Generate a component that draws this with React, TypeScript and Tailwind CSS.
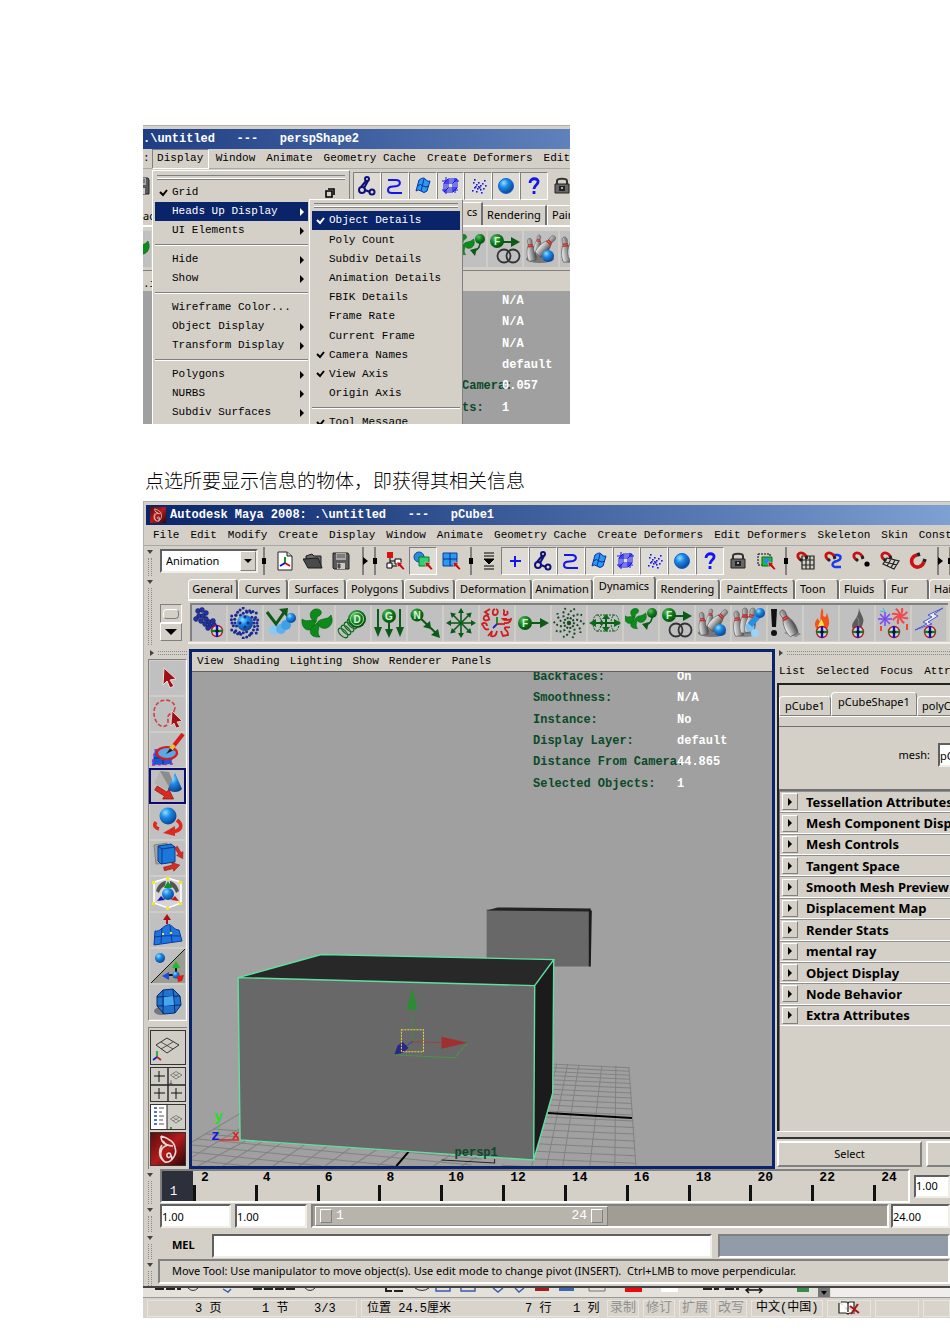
import React from 'react';
import clsx from 'clsx';

const raised = 'border border-t-white border-l-white border-r-[#808080] border-b-[#808080]';
const sunken = 'border border-t-[#808080] border-l-[#808080] border-r-white border-b-white';
const field = 'border-2 border-t-[#606060] border-l-[#606060] border-r-[#f0eee8] border-b-[#f0eee8] bg-white';
const mono = "font-['Liberation_Mono',monospace]";

/* ---------- shared icon parts ---------- */

const IconDefs = () => (
  <svg width="0" height="0" className="absolute" aria-hidden="true">
    <defs>
      <radialGradient id="blue" cx="0.35" cy="0.3" r="0.75">
        <stop offset="0" stopColor="#8fe0ff" />
        <stop offset="0.4" stopColor="#1b8ae6" />
        <stop offset="1" stopColor="#0b3f8c" />
      </radialGradient>
      <radialGradient id="green" cx="0.35" cy="0.3" r="0.75">
        <stop offset="0" stopColor="#5fbf5f" />
        <stop offset="0.5" stopColor="#0f7d1c" />
        <stop offset="1" stopColor="#064a0d" />
      </radialGradient>
      <linearGradient id="pin" x1="0" x2="1">
        <stop offset="0" stopColor="#f2f2f2" />
        <stop offset="1" stopColor="#444" />
      </linearGradient>
      <linearGradient id="maya" x1="0" x2="1" y1="0" y2="1">
        <stop offset="0" stopColor="#5c0a0a" />
        <stop offset="0.5" stopColor="#b31b1b" />
        <stop offset="1" stopColor="#2b0505" />
      </linearGradient>
    </defs>
  </svg>
);

const Target = () => (
  <g>
    <circle cx="17" cy="25" r="5.5" fill="#d6d6ea" stroke="#c01818" strokeWidth="1.4" />
    <path d="M17 19v12" stroke="#1212b8" strokeWidth="2.4" />
    <path d="M11 25h12" stroke="#0a7a2a" strokeWidth="2.4" />
    <path d="M17 23v4M15 25h4" stroke="#000" strokeWidth="1" />
  </g>
);

const Blades = () => (
  <g fill="#0c8a1a" stroke="#065c10" strokeWidth="0.6">
    <path d="M15 15C8 13 7 4 14 2c7-1 8 5 4 7-3 1-2 4-3 6z" />
    <path d="M16 16c3-6 10-2 14-8 4 9-3 15-9 13-3-1-3-3-5-5z" />
    <path d="M15 15c-5-4-9 1-14-3-1 9 5 13 10 10 3-2 2-5 4-7z" />
    <path d="M16 16c5 5-2 8 3 14-9 1-12-5-8-10 2-2 4-2 5-4z" />
  </g>
);

const Pin = ({ at }: { at: string }) => (
  <g transform={at}>
    <path d="M0-13c3 0 3 4 2 7 3 5 4 12 2 18h-8c-2-6-1-13 2-18-1-3-1-7 2-7z" fill="url(#pin)" stroke="#555" strokeWidth="0.6" />
    <path d="M-2.6-6h5.2M-3-4h6" stroke="#c22" strokeWidth="1.3" />
  </g>
);

const Magnet = () => (
  <g fill="none" strokeWidth="2.8">
    <path d="M5 9C1 7 1 3 4 2s6 2 7 5" stroke="#c41111" />
    <path d="M4 8l2 2M10 5l1 3" stroke="#222" />
  </g>
);

const letter = (x: number, y: number, ch: string) => (
  <text x={x} y={y} fill="#d8f5d8" fontSize="10" fontWeight="700" textAnchor="middle" fontFamily="Liberation Sans">{ch}</text>
);

const burst = Array.from({ length: 8 }, (_, i) => i * 45);

const dots = (n: number, r: number, cx: number, cy: number) =>
  Array.from({ length: n }, (_, i) => {
    const a = (i / n) * Math.PI * 2;
    const d = r + ((i * 5) % 4);
    return <circle key={i} cx={cx + Math.cos(a) * d} cy={cy + Math.sin(a) * d} r="1.5" fill="#1b2a94" />;
  });

/* ---------- shelf icons, 32 x 32 ---------- */

const shelfIcons: Record<string, React.ReactNode> = {
  Emitter: (
    <g>
      {[[5, 4], [9, 3], [13, 6], [6, 9], [10, 9], [3, 12], [8, 14], [13, 12], [16, 15], [12, 17], [17, 19], [20, 14], [15, 21], [21, 18]].map(([x, y]) => (
        <circle key={`${x}-${y}`} cx={x} cy={y} r="2.4" fill="#2334a0" stroke="#101c66" strokeWidth="0.6" />
      ))}
      <g transform="translate(7 -1)"><Target /></g>
    </g>
  ),
  'Emit from Object': (
    <g>
      {dots(18, 9, 16, 16)}
      {dots(26, 12, 16, 16)}
      <circle cx="16" cy="16" r="8" fill="url(#blue)" />
      {dots(4, 3, 16, 16)}
    </g>
  ),
  Collide: (
    <g>
      <circle cx="9" cy="23" r="5" fill="#8cc8f0" />
      <circle cx="16" cy="22" r="5" fill="#5db0ee" />
      <circle cx="21" cy="18" r="5" fill="#3fa0ea" />
      <circle cx="26" cy="11" r="5" fill="url(#blue)" />
      <path d="M2 5l9 12L20 4" fill="none" stroke="#0b5a17" strokeWidth="3" />
      <path d="M14 2l9-1-1 9z" fill="#0b5a17" />
    </g>
  ),
  Air: <Blades />,
  Drag: (
    <g>
      {[0, 3, 6, 9].map((i) => (
        <ellipse key={i} cx={6 + i} cy={26 - i} rx="3" ry="6" transform={`rotate(-45 ${6 + i} ${26 - i})`} fill="none" stroke="#0c6a1a" strokeWidth="1.3" />
      ))}
      <circle cx="20" cy="12" r="9" fill="url(#green)" />
      <circle cx="20" cy="12" r="6.5" fill="none" stroke="#a8dca8" />
      {letter(20, 16, 'D')}
    </g>
  ),
  Gravity: (
    <g>
      <path d="M5 2v22M27 2v22M16 16v10" stroke="#0b5a17" strokeWidth="2" />
      <path d="M1 20h8l-4 10zM12 22h8l-4 9zM23 20h8l-4 10z" fill="#0b5a17" />
      <circle cx="16" cy="9" r="7" fill="url(#green)" />
      {letter(16, 13, 'G')}
    </g>
  ),
  Newton: (
    <g>
      <path d="M8 8l20 19" stroke="#0b5a17" strokeWidth="2" />
      <path d="M14 20l7-6 1 8zM22 28l7-6 2 9z" fill="#0b5a17" />
      <circle cx="8" cy="8" r="6.5" fill="url(#green)" />
      {letter(8, 12, 'N')}
    </g>
  ),
  Radial: (
    <g>
      {burst.map((a) => (
        <g key={a} transform={`rotate(${a} 16 16)`}>
          <path d="M16 16V3" stroke="#0b5a17" strokeWidth="1.6" />
          <path d="M13 6l3-5 3 5z" fill="#0b5a17" />
        </g>
      ))}
    </g>
  ),
  Turbulence: (
    <g fill="none" strokeWidth="1.8">
      <path d="M14 2c-3 1-3 6 0 6s4-5 1-6M22 3c3 0-1 5 2 5s3-2 2-4M26 12h-4c2 2 5 1 8 0-1 5-5 4-7 4M29 20c-3 1-6-1-5 2 3 4 3 2 3 6l-5 1-2-5M16 24c-1 5-3 6-6 5l1-5-4 5M8 22c-4 2-5-2-7-5 2-2 5-1 5 2M9 12C4 15 2 13 3 10c2-3 5-1 5 2M8 8l-4-3 5-3" stroke="#d01c1c" />
      <path d="M16 17v-7" stroke="#0b8a1a" />
      <path d="M16 17h8" stroke="#d01c1c" />
      <path d="M16 17l-4 4" stroke="#2222c0" />
    </g>
  ),
  Uniform: (
    <g>
      <path d="M12 16h14" stroke="#0b5a17" strokeWidth="2" />
      <path d="M23 11l9 5-9 5z" fill="#0b5a17" />
      <circle cx="8" cy="16" r="7" fill="url(#green)" />
      {letter(8, 20, 'F')}
    </g>
  ),
  Vortex: (
    <g fill="none" stroke="#1b4a22" strokeWidth="2" strokeDasharray="2 2">
      {Array.from({ length: 10 }, (_, i) => i * 36).map((a) => (
        <path key={a} d="M16 16c-3-5-1-12 6-14" transform={`rotate(${a} 16 16)`} />
      ))}
    </g>
  ),
  'Volume Axis': (
    <g>
      <path d="M8 8h18M8 24h18" stroke="#0b5a17" strokeDasharray="2 1" />
      <ellipse cx="8" cy="16" rx="4" ry="8" fill="none" stroke="#0b5a17" strokeDasharray="2 1" />
      <ellipse cx="26" cy="16" rx="4" ry="8" fill="none" stroke="#0b5a17" strokeDasharray="2 1" />
      <path d="M4 16h24M17 9v14" stroke="#0b5a17" strokeWidth="2" />
      <path d="M0 16l7-4v8zM32 16l-7-4v8zM17 7l4 5h-8zM17 25l4-5h-8zM12 12l3 4-3 4z" fill="#0b6a17" />
    </g>
  ),
  'Volume Curve': (
    <g>
      <g transform="translate(-1 0) scale(0.72)"><Blades /></g>
      <path d="M27 7c1 6-2 10-6 11" fill="none" stroke="#0b5a17" strokeWidth="1.6" />
      <path d="M17 17l7-2-2 8z" fill="#0b5a17" />
      <circle cx="27" cy="6" r="5" fill="url(#green)" />
    </g>
  ),
  'Use Selected': (
    <g>
      <path d="M12 9h12" stroke="#0b5a17" strokeWidth="2" />
      <path d="M22 4l9 5-9 5z" fill="#0b5a17" />
      <circle cx="8" cy="8" r="7" fill="url(#green)" />
      {letter(8, 12, 'F')}
      <circle cx="15" cy="23" r="6.5" fill="none" stroke="#333" strokeWidth="1.8" />
      <circle cx="24" cy="23" r="6.5" fill="none" stroke="#333" strokeWidth="1.8" />
    </g>
  ),
  'Active Body': (
    <g>
      <ellipse cx="15" cy="26" rx="14" ry="4" fill="#777" />
      <Pin at="translate(6 17) rotate(-8) scale(.9)" />
      <Pin at="translate(13 11) rotate(8) scale(.7)" />
      <Pin at="translate(21 13) rotate(42)" />
      <circle cx="23" cy="23" r="6" fill="url(#blue)" />
    </g>
  ),
  'Passive Body': (
    <g>
      <ellipse cx="12" cy="27" rx="11" ry="3" fill="#888" />
      <Pin at="translate(5 17) rotate(-8)" />
      <Pin at="translate(12 14)" />
      <Pin at="translate(18 14) rotate(10)" />
      <circle cx="17" cy="20" r="4.500" fill="#7cc0f0" />
      <circle cx="22" cy="26" r="4" fill="#9ed2f5" />
      <path d="M17 18l9-10" stroke="#2b8fe0" strokeWidth="6" />
      <circle cx="27" cy="6" r="5" fill="url(#blue)" />
    </g>
  ),
  'Set Active Key': (
    <g>
      <path d="M2 2h6l-1 18H3z" fill="#111" />
      <circle cx="5" cy="26" r="3" fill="#111" />
      <path d="M15 26l12 4 5-3-9-5z" fill="#888" />
      <Pin at="translate(19 16) rotate(-28) scale(1.1)" />
    </g>
  ),
  'Create Fire': (
    <g>
      <path d="M17 1c3 5-1 7 3 9 2-1 1-3 2-4 2 6 4 12-1 17h-8c-5-4-3-9 0-12 0 2 1 3 2 3 1-5 0-8 2-13z" fill="#f0541c" />
      <path d="M16 12c2 3 4 5 2 10h-4c-2-4 1-6 2-10z" fill="#ffe24a" />
      <Target />
    </g>
  ),
  'Create Smoke': (
    <g>
      <path d="M18 1c1 6 6 10 4 15-1 5-3 6-5 7h-4c-3-3-2-6 0-9 3-4 5-8 5-13z" fill="#5c5c5c" />
      <path d="M16 10c3 4 2 8 0 12" stroke="#888" fill="none" />
      <Target />
    </g>
  ),
  'Create Fireworks': (
    <g>
      {burst.map((a) => (
        <g key={a}>
          <path d="M8 12V5" transform={`rotate(${a} 8 12)`} stroke="#7a4af0" strokeWidth="1.6" />
          <path d="M23 9q3-4 2-8" transform={`rotate(${a} 23 9)`} fill="none" stroke="#f04a4a" strokeWidth="2" />
        </g>
      ))}
      <path d="M6 1l2 4M3 4l5 1" stroke="#3ab8e8" />
      <path d="M4 19v5M30 17v6" stroke="#f04a2a" strokeWidth="2" />
      <Target />
    </g>
  ),
  'Create Lightning': (
    <g>
      <path d="M30 1L15 8l4 2-9 5 4 2L2 23l17-6-4-2 10-6-4-2z" fill="#eef" stroke="#4a5ad0" strokeWidth="1" />
      <Target />
    </g>
  ),
};

/* ---------- status line icons, 20 x 20 ---------- */

const cursor = <path d="M12 11l6 1-2 1 4 5-2 1-4-4-1 2z" fill="#c01010" stroke="#fff" strokeWidth="0.4" />;

const lineIcons: Record<string, React.ReactNode> = {
  New: (
    <g>
      <path d="M3 1h9l5 4v14H3z" fill="#fff" stroke="#222" />
      <path d="M12 1v4h5" fill="#ccc" stroke="#222" />
      <path d="M10 12V6" stroke="#0a9a1a" strokeWidth="2" />
      <path d="M10 12l5 3" stroke="#d01010" strokeWidth="2" />
      <path d="M10 12l-5 3" stroke="#1010d0" strokeWidth="2" />
    </g>
  ),
  Open: (
    <g>
      <path d="M3 8V5l6-2 2 2h7v11" fill="#6a6a6a" stroke="#1c1c1c" />
      <path d="M0 8l15-1 4 10H5z" fill="#4a4a4a" stroke="#1c1c1c" />
    </g>
  ),
  Save: (
    <g>
      <path d="M2 2h15l1 2v14H3l-1-1z" fill="#5a5a5a" stroke="#222" />
      <path d="M5 2h10v7H5z" fill="#a8a8a8" />
      <path d="M6 12h8v6H6z" fill="#c8c8c8" />
      <path d="M7 13h2v4H7zM6 4h8M6 6h8" stroke="#555" fill="#333" />
    </g>
  ),
  Hierarchy: (
    <g>
      <path d="M5 6v9M5 10h7M5 15h7" stroke="#000" fill="none" />
      <path d="M2 1h6v6H2z" fill="#d81010" />
      <path d="M2 12h5v5H2zM10 8h6v5h-6z" fill="#fff" stroke="#000" />
      {cursor}
    </g>
  ),
  Object: (
    <g>
      <circle cx="6" cy="6" r="5" fill="#2a8ae0" stroke="#104a90" />
      <path d="M6 6h10v9H6z" fill="#30d070" stroke="#0a7a2a" />
      {cursor}
    </g>
  ),
  Component: (
    <g>
      <path d="M2 2h14v13H2z" fill="#2a9af0" stroke="#0a3aa0" />
      <path d="M9 2v13M2 8h14" stroke="#0a2a90" />
      {cursor}
    </g>
  ),
  Mask: <path d="M5 2h10M5 5h10M5 15h10M5 18h10M5 8h10l-5 5z" fill="#000" stroke="#000" strokeWidth="1" />,
  Handles: <path d="M10 5v11M5 10h11" stroke="#1414f0" strokeWidth="2" />,
  Joints: (
    <g fill="none" stroke="#10107a" strokeWidth="2">
      <circle cx="10" cy="3" r="2" /><circle cx="5" cy="14" r="3" /><circle cx="15" cy="16" r="2.5" />
      <path d="M9 5l-5 6M11 5l-4 7M8 14l5 2" />
    </g>
  ),
  Curves: <path d="M3 4h8c5 0 5 5 1 6-5 1-9 0-9 4s4 3 14 3" fill="none" stroke="#1414f0" strokeWidth="2" />,
  Surfaces: (
    <g stroke="#0a30a0" fill="#2a9af0">
      <path d="M6 4q5-4 7 0 2 2 4 1l-3 10q-3 3-6 0-3-2-5 0z" />
      <path d="M11 3l-3 12M4 10q4-3 6 0 3 2 6 0" fill="none" />
    </g>
  ),
  Deformers: <path d="M3 7h9v9H3zM7 3h9v9H7zM3 7l4-4M12 7l4-4M12 16l4-4M3 16l4-4M5 1v17M14 2v15M1 5h17M1 14h16" fill="none" stroke="#1414f0" />,
  Dynamics: (
    <g fill="#1414f0">
      {[[10, 10], [8, 8], [12, 9], [9, 12], [12, 13], [6, 11], [14, 7], [10, 6], [5, 6], [15, 12], [4, 14], [8, 15], [13, 16], [16, 4], [6, 3], [11, 11], [7, 10], [17, 9]].map(([x, y]) => (
        <rect key={`${x}-${y}`} x={x} y={y} width="1.6" height="1.6" />
      ))}
    </g>
  ),
  Rendering: <circle cx="10" cy="10" r="7.5" fill="url(#blue)" stroke="#1060d8" />,
  Miscellaneous: <path d="M6 7c0-6 9-5 8-1 0 3-4 3-4 7M10 15v3" fill="none" stroke="#1414f0" strokeWidth="2.8" />,
  Lock: (
    <g>
      <path d="M5 9V5c0-3 10-3 10 0v4" fill="none" stroke="#333" strokeWidth="2" />
      <path d="M3 8h14v9H3z" fill="#666" stroke="#222" />
      <path d="M7 10h6v5H7z" fill="#222" /><path d="M9 11h2v2H9z" fill="#aaa" />
    </g>
  ),
  Highlight: (
    <g>
      <path d="M2 3h12v11H2z" fill="none" stroke="#000" strokeDasharray="2 1" />
      <path d="M6 6h10v9H6z" fill="#18c030" stroke="#0a6a1a" /><circle cx="11" cy="10" r="3" fill="#2a8ae0" />
      {cursor}
    </g>
  ),
  'Snap to Grid': (
    <g>
      <path d="M6 5h12v13H6zM10 5v13M14 5v13M6 9h12M6 14h12" fill="none" stroke="#222" strokeWidth="1.2" />
      <Magnet />
    </g>
  ),
  'Snap to Curve': (
    <g>
      <path d="M9 4h5c4 1 3 5-1 6-5 1-6 5-2 6h6" fill="none" stroke="#1a3af0" strokeWidth="2.4" />
      <Magnet />
    </g>
  ),
  'Snap to Point': (
    <g>
      <circle cx="15" cy="13" r="2.6" fill="#000" />
      <Magnet />
    </g>
  ),
  'Snap to Plane': (
    <g>
      <path d="M7 7l12 3-5 8-11-5zM11 8l-4 7M15 9l-4 8M5 11l12 3" fill="none" stroke="#222" strokeWidth="1.2" />
      <Magnet />
    </g>
  ),
  'Make Live': (
    <g fill="none" strokeWidth="3.6">
      <path d="M9 4C4 5 2 10 5 14s9 2 11-3" stroke="#c81414" />
      <path d="M9 4l3-1M16 11l1-3" stroke="#222" />
    </g>
  ),
};

const LineIcon = ({ name }: { name: string }) => (
  <svg viewBox="0 0 20 20" className="size-5 flex-none" aria-hidden="true">{lineIcons[name]}</svg>
);

const ToolButton = ({ name, framed, width = 'w-7 flex-none' }: { name: string; framed?: boolean; width?: string }) => (
  <button
    aria-label={name}
    className={clsx('flex h-7 items-center justify-center border', width, framed ? 'border-t-[#808080] border-l-[#808080] border-r-white border-b-white bg-[#dedbd4]' : 'border-transparent')}
  >
    <LineIcon name={name} />
  </button>
);

const Divider = ({ arrow }: { arrow?: boolean }) => (
  <svg viewBox="0 0 12 28" className="h-7 w-3 flex-none" aria-hidden="true">
    <path d="M6 0v28" stroke="#333" strokeWidth="1" />
    {arrow ? <path d="M6 10l5 4-5 4z" /> : <path d="M4 11h4v6H4z" />}
  </svg>
);

const Grip = ({ className }: { className?: string }) => (
  <div className={clsx('flex w-3 flex-none flex-col items-center gap-1 pt-1', className)}>
    <svg viewBox="0 0 6 4" className="h-1 w-1.5 flex-none"><path d="M0 0h6L3 4z" fill="#444" /></svg>
    <div className="w-1 flex-1 border-x border-dotted border-[#8a8a8a]" />
  </div>
);

const HGrip = () => (
  <div className="flex h-2.5 flex-none items-center gap-1 pb-0.5 pl-0.5">
    <svg viewBox="0 0 4 6" className="h-1.5 w-1 flex-none"><path d="M0 0v6l4-3z" fill="#444" /></svg>
    <div className="h-1 flex-1 border-y border-dotted border-[#8a8a8a]" />
  </div>
);

const ShelfButton = ({ name }: { name: string }) => (
  <button aria-label={name} className="flex h-9 w-9 flex-none items-center justify-center border-r-2 border-[#d0cdc6] bg-[#c0c0c0]">
    <svg viewBox="0 0 32 32" className="size-8 flex-none" aria-hidden="true">{shelfIcons[name]}</svg>
  </button>
);

/* ---------- tool box ---------- */

const RedArrow = ({ at }: { at: string }) => (
  <path d="M0-2h10v-3l8 5-8 5v-3H0z" transform={at} fill="#dc2a22" stroke="#8c1410" strokeWidth="0.6" />
);

const toolIcons: Record<string, React.ReactNode> = {
  Select: <path d="M13 7l12 11-6 1 4 6-4 2-3-7-4 4z" fill="#9c1016" stroke="#f4dcdc" strokeWidth="1" />,
  Lasso: (
    <g>
      <path d="M23 14c4-8-6-13-13-10S1 16 5 24s12 6 12 1-1-6 2-8 4-1 4-3z" fill="none" stroke="#d04040" strokeWidth="1.6" strokeDasharray="4 2" />
      <path d="M21 14l10 10-5 1 3 5-4 1-2-5-3 3z" fill="#9c1016" stroke="#f4dcdc" strokeWidth="0.8" />
    </g>
  ),
  Paint: (
    <g>
      <path d="M4 17l16-1 1 15-20 1z" fill="#1a5ad0" stroke="#b020d0" strokeDasharray="3 3" strokeWidth="1.6" />
      <path d="M12 17v15M3 25h18" stroke="#0a2a80" />
      <ellipse cx="16" cy="20" rx="10" ry="6" fill="#5aa8e8" stroke="#d81c1c" strokeWidth="2.2" />
      <path d="M15 21l5-7 3 3z" fill="#222" />
      <path d="M21 15L32 1" stroke="#d81c1c" strokeWidth="4" />
      <path d="M20 16l3-4" stroke="#f0c030" strokeWidth="4" />
    </g>
  ),
  Move: (
    <g>
      <path d="M3 14L9 2l3 3 8 13-4 3z" fill="#b4b4b4" />
      <path d="M9 2l9 1 5 12-5 3z" fill="#8c8c8c" />
      <path d="M24 4l7 16c-3 4-11 4-14 0z" fill="url(#blue)" />
      <RedArrow at="translate(5 19) rotate(32) scale(1.15)" />
    </g>
  ),
  Rotate: (
    <g>
      <path d="M5 17c-3 4 0 6 3 7M26 15c6 5 5 10-4 12" fill="none" stroke="#dc2a22" strokeWidth="3.6" />
      <path d="M24 21v10l-12-3z" fill="#dc2a22" />
      <circle cx="17" cy="11" r="8.5" fill="url(#blue)" />
    </g>
  ),
  Scale: (
    <g>
      <path d="M3 4l13-2v20L5 23z" fill="#a4a4a4" stroke="#808080" />
      <path d="M7 5l13-2 4 3v15l-14 2-3-3z" fill="#1a78d8" stroke="#0a3a90" />
      <path d="M7 5l4 3 13-2M11 8v15" fill="none" stroke="#0a3a90" />
      <RedArrow at="translate(25 6) rotate(60) scale(.75)" />
      <RedArrow at="translate(13 28) rotate(-14) scale(.9)" />
    </g>
  ),
  Universal: (
    <g>
      <path d="M3 5l14-4 13 4v21l-13 5-14-5z" fill="#d4d4d4" stroke="#fff" strokeWidth="1.6" />
      <path d="M5 14c2-8 8-10 10-10l-1 5c-4 2-5 4-6 7zM28 14c-2-8-8-10-9-10l0 5c4 2 5 4 6 7z" fill="#555" />
      <circle cx="17" cy="17" r="6" fill="url(#blue)" />
      <path d="M17 4l4 7h-8z" fill="#10902a" />
      <path d="M6 24l8-1-4-4z" fill="#1818b0" /><path d="M28 24l-8-1 4-4z" fill="#c01818" />
      {[[3, 5], [17, 1], [30, 5], [3, 26], [17, 31], [30, 26]].map(([x, y]) => (
        <rect key={`${x}-${y}`} x={x - 2} y={y - 1} width="3" height="3" fill="#f4e820" />
      ))}
    </g>
  ),
  'Soft Modification': (
    <g>
      <path d="M4 18c5 1 7-4 12-6s6 5 12 5l3 11-28 4z" fill="#1f74e0" stroke="#0a3a9a" />
      <path d="M11 15l-1 15M19 13l2 16M4 24c9-2 17-1 25-1" stroke="#0a3a9a" fill="none" />
      <path d="M16 11V6" stroke="#b01010" strokeWidth="2" /><path d="M12 7l4-6 4 6z" fill="#b01010" />
      <path d="M11 20h2v2h-2zM19 19h2v2h-2z" fill="#f4e820" />
    </g>
  ),
  Manipulator: (
    <g>
      <path d="M34 0v34H0z" fill="#9c9c90" /><path d="M34 0L0 34" stroke="#111" />
      <circle cx="9" cy="9" r="5" fill="url(#blue)" />
      <path d="M25 26V16M25 26h-9" stroke="#111" strokeWidth="2" />
      <circle cx="25" cy="26" r="3.5" fill="url(#blue)" />
      <path d="M21 19l4-7 4 7z" fill="#18c028" /><path d="M11 27l7-4v8z" fill="#1a4ae0" /><path d="M26 27l7-1-2 6-4 1z" fill="#e01818" />
    </g>
  ),
  'Last Tool': (
    <g>
      <ellipse cx="10" cy="26" rx="7" ry="4" fill="#777" />
      <path d="M12 5l10-1 7 7 1 9-6 8-11 1-7-8 0-10z" fill="#1f74d0" stroke="#0a2a6a" />
      <path d="M12 5l0 24M22 4l2 24M6 12l23-1M6 21l24-1" stroke="#0a2a6a" fill="none" />
      <path d="M13 12l9-1 1 9-10 1z" fill="#4aa4f0" />
    </g>
  ),
};

const MayaMark = () => (
  <g>
    <rect width="34" height="34" fill="url(#maya)" />
    <path d="M10 4c8 2 14 7 14 12 2 4-1 12-7 14M10 4c0 6 3 8 6 9M12 9c3 5 7 5 10 5M17 13c-8 2-10 11-3 17 6 1 8-3 6-7-1-3-5-2-4 1s4 1 4-1M14 30c-6-4-7-11-3-17" fill="none" stroke="#e8d8d8" strokeWidth="1.6" />
  </g>
);

const Diamond = ({ at }: { at?: string }) => (
  <g transform={at} fill="none" stroke="#333">
    <path d="M5 14L16 7l12 7-12 8z" />
    <path d="M10 11l12 7M22 11l-12 7" strokeWidth="0.8" />
  </g>
);

const Axes = ({ at }: { at?: string }) => (
  <g transform={at} strokeWidth="1.6">
    <path d="M6 26v-6" stroke="#10a020" /><path d="M6 26l4 3" stroke="#d01818" /><path d="M6 26l-4 3" stroke="#1818d0" />
  </g>
);

const Cell = ({ name, children, className }: { name: string; children: React.ReactNode; className: string }) => (
  <button aria-label={name} className={clsx('flex flex-none items-center justify-center overflow-hidden', className)}>
    <svg viewBox="0 0 34 34" className="size-[34px] flex-none" aria-hidden="true">{children}</svg>
  </button>
);

const layoutCell = 'border border-[#333] bg-[#d0cdc6]';

const ToolBox = () => (
  <div className="flex w-[45px] flex-none flex-col pr-0.5 pl-1">
    <HGrip />
    <div className={clsx('flex flex-col', sunken)}>
      {Object.keys(toolIcons).map((name) => (
        <Cell key={name} name={name} className={clsx('h-9 bg-[#c0c0c0]', name === 'Move' ? 'border-2 border-[#0a0a70]' : 'border border-[#d0cdc6]')}>
          {toolIcons[name]}
        </Cell>
      ))}
    </div>
    <div className="mt-1.5 flex min-h-0 flex-1 flex-col gap-0.5 overflow-hidden border-t border-l border-[#808080] px-px pt-0.5">
      <Cell name="Single Perspective View" className={clsx('h-[35px]', layoutCell)}>
        <Diamond /><Axes />
      </Cell>
      <Cell name="Four View" className={clsx('h-[35px]', layoutCell)}>
        <path d="M17 0v34M0 17h34" stroke="#222" strokeWidth="1.4" />
        <path d="M8 3v11M3 8h11M8 20v11M3 25h11M25 20v11M20 25h11" stroke="#111" />
        <Diamond at="translate(17 0) scale(.5)" /><Axes at="translate(17 2) scale(.5)" />
      </Cell>
      <Cell name="Persp/Outliner" className={clsx('h-[26px]', layoutCell)}>
        <path d="M0 0h16v34H0z" fill="#fff" /><path d="M16 0v34" stroke="#222" />
        <path d="M3 8h3M3 12h3M3 16h3M3 20h3M3 24h3" stroke="#1848c0" strokeWidth="1.6" />
        <path d="M8 8h5M8 12h3M8 16h5M8 20h4M8 24h5" stroke="#555" />
        <Diamond at="translate(17 12) scale(.5)" /><path d="M20 27v6" stroke="#10b020" strokeWidth="2" />
      </Cell>
      <Cell name="Maya" className="h-[34px] border border-[#333] bg-[#801010]"><MayaMark /></Cell>
    </div>
  </div>
);

/* ---------- 3D view ---------- */

const Scene = () => (
  <svg viewBox="191 672 581 493" preserveAspectRatio="xMinYMin slice" className="absolute inset-0 size-full" aria-hidden="true">
    <g stroke="#828282" strokeWidth="1" fill="none">
      {Array.from({ length: 19 }, (_, i) => {
        const y = 1063 + i * 3.4 + i * i * 0.13;
        return <path key={i} d={`M500 ${y - 2}L${627 + i * 0.4} ${y + 4}`} />;
      })}
      <path d="M555 1063L530 1165M566 1063L545 1165M577 1064L561 1165M600 1065L588 1165M614 1065L613 1165M627 1066L634 1165" />
      <path d="M191 1141L240 1112M191 1156L240 1127M197 1165L250 1137M222 1165L262 1140M246 1165L282 1141M272 1165L306 1142M298 1165L328 1144M324 1165L352 1145M350 1165L378 1147M376 1165L402 1148M432 1165L452 1152M460 1165L478 1154" />
      <path d="M213 1128L420 1145M205 1133L480 1158M196 1138L470 1164M191 1144L395 1165M191 1151L320 1165M191 1159L245 1165" />
    </g>
    <path d="M546 1112L630 1117M395 1165L407 1151" stroke="#000" strokeWidth="2" />
    <path d="M440 1159l53 3v-4" fill="none" stroke="#222" />
    <path d="M485 909h103v57H485z" fill="#686868" />
    <path d="M485 910l11-3 93 1v3z" fill="#222" />
    <path d="M587 910h3l-1 56h-2z" fill="#1a1a1a" />
    <path d="M237 977l296 8-1 174-293-20z" fill="#686868" />
    <path d="M237 977l83-23 232 5-19 26z" fill="#282828" />
    <path d="M533 985l19-26-1 133-19 67z" fill="#1b1b1b" />
    <path d="M237 977l296 8-1 174-293-20zM237 977l83-23 232 5-19 26M552 959l-1 133-19 67" fill="none" stroke="#5fe0a0" strokeWidth="1.4" />
    <path d="M411 1009v32" stroke="#2aa02a" strokeDasharray="1 1" />
    <path d="M411 987l-6 22h11z" fill="#2c8c32" />
    <path d="M411 1041l30 1" stroke="#d02020" strokeDasharray="1 1" />
    <path d="M440 1036v12l26-6z" fill="#a03030" />
    <path d="M411 1041l-10 6" stroke="#2020c0" strokeDasharray="1 1" />
    <path d="M393 1054l3-9 5-4 6 6-5 5z" fill="#28288c" />
    <path d="M393 1054l60 3 13-15" fill="none" stroke="#2ac02a" strokeDasharray="1 1" />
    <path d="M400 1029h22v22h-22z" fill="none" stroke="#e8d83c" strokeDasharray="2 1" />
    <g fontFamily="Liberation Mono" fontWeight="700">
      <path d="M218 1125v10" stroke="#20e020" strokeDasharray="3 2" />
      <path d="M218 1139h20" stroke="#e02020" strokeWidth="1.4" />
      <text x="213" y="1120" fontSize="15" fill="#20e020">y</text>
      <text x="210" y="1139" fontSize="15" fill="#1818e0">z</text>
      <text x="231" y="1138" fontSize="13" fill="#e02020">x</text>
      <text x="453" y="1155" fontSize="12" fill="#0a4a28">persp1</text>
    </g>
  </svg>
);

const hud = [
  ['Backfaces:', 'On'],
  ['Smoothness:', 'N/A'],
  ['Instance:', 'No'],
  ['Display Layer:', 'default'],
  ['Distance From Camera:', '44.865'],
  ['Selected Objects:', '1'],
];

const Viewport = () => (
  <div className="flex min-w-0 flex-1 flex-col border-3 border-[#0a246a]">
    <nav className={clsx('flex h-5 flex-none items-center gap-2.5 border-b border-[#606060] bg-[#d4d0c8] pl-[5px] text-[11px]', mono)}>
      {['View', 'Shading', 'Lighting', 'Show', 'Renderer', 'Panels'].map((m) => <button key={m}>{m}</button>)}
    </nav>
    <div className="relative flex-1 overflow-hidden bg-[#a0a0a0]">
      <Scene />
      <dl className={clsx('absolute top-[-5px] left-[341px] grid h-32 auto-rows-fr grid-cols-[144px_1fr] text-[12px] leading-[21px] font-bold whitespace-nowrap', mono)}>
        {hud.map(([label, value]) => (
          <React.Fragment key={label}>
            <dt className="text-[#0a4a28]">{label}</dt>
            <dd className="text-white">{value}</dd>
          </React.Fragment>
        ))}
      </dl>
    </div>
  </div>
);

/* ---------- attribute editor ---------- */

const sections = [
  'Tessellation Attributes', 'Mesh Component Display', 'Mesh Controls', 'Tangent Space', 'Smooth Mesh Preview',
  'Displacement Map', 'Render Stats', 'mental ray', 'Object Display', 'Node Behavior', 'Extra Attributes',
];

const AttributeEditor = () => (
  <aside className="flex w-[175px] flex-none flex-col overflow-hidden pl-0.5 whitespace-nowrap">
    <HGrip />
    <nav className={clsx('flex h-6 items-center gap-[11px] pl-0.5 text-[11px]', mono)}>
      {['List', 'Selected', 'Focus', 'Attributes'].map((m) => <button key={m}>{m}</button>)}
    </nav>
    <div className="flex flex-1 flex-col border-t-2 border-l-2 border-[#222]">
      <div className="mt-2 flex h-6 items-end border-b border-white">
        <button className={clsx('h-5 w-[52px] flex-none rounded-t', raised)}>pCube1</button>
        <button className={clsx('h-6 w-[86px] flex-none rounded-t pb-1', raised)}>pCubeShape1</button>
        <button className={clsx('h-5 w-[60px] flex-none rounded-t pl-1 text-left', raised)}>polyCube1</button>
      </div>
      <div className="h-2.5 border-b border-[#707070]" />
      <div className="mt-4 flex h-6 items-center gap-2">
        <label htmlFor="mesh" className="w-[151px] flex-none text-right">mesh:</label>
        <input id="mesh" readOnly defaultValue="pCubeShape1" className={clsx('h-6 w-40 flex-none', field)} />
      </div>
      <div className="mt-[22px] flex-1 border-t-2 border-l border-[#707070]">
        <div className="flex h-[235px] flex-col text-[13px] leading-4 font-bold">
          {sections.map((s) => (
            <button key={s} className="flex flex-1 items-center gap-2 border-t border-b border-t-[#909090] border-b-white pl-0.5">
              <span className={clsx('flex h-[17px] w-4 flex-none items-center justify-center', raised)}>
                <svg viewBox="0 0 4 8" className="h-2 w-1"><path d="M0 0v8l4-4z" /></svg>
              </span>
              {s}
            </button>
          ))}
        </div>
      </div>
    </div>
    <div className="mb-0.5 h-2 border-t border-b-2 border-t-white border-b-[#333]" />
    <div className="flex h-7 gap-1 pb-0.5">
      <button className={clsx('w-[145px] flex-none', raised, 'border-2')}>Select</button>
      <button className={clsx('w-[145px] flex-none', raised, 'border-2')}>Load Attributes</button>
    </div>
  </aside>
);

/* ---------- main window ---------- */

const tabs: [string, string][] = [
  ['General', 'w-[50px]'], ['Curves', 'w-[50px]'], ['Surfaces', 'w-[58px]'], ['Polygons', 'w-[58px]'], ['Subdivs', 'w-[51px]'],
  ['Deformation', 'w-[77px]'], ['Animation', 'w-[61px]'], ['Dynamics', 'w-[63px]'], ['Rendering', 'w-[64px]'],
  ['PaintEffects', 'w-[75px]'], ['Toon', 'w-[44px]'], ['Fluids', 'w-[47px]'], ['Fur', 'w-[43px]'], ['Hair', 'w-[44px]'],
];

const masks = ['Handles', 'Joints', 'Curves', 'Surfaces', 'Deformers', 'Dynamics', 'Rendering', 'Miscellaneous'];
const snaps = ['Snap to Grid', 'Snap to Curve', 'Snap to Point', 'Snap to Plane', 'Make Live'];
const mainMenu = ['File', 'Edit', 'Modify', 'Create', 'Display', 'Window', 'Animate', 'Geometry Cache', 'Create Deformers', 'Edit Deformers', 'Skeleton', 'Skin', 'Constrain'];

const StatusLine = () => (
  <div className="flex h-[30px] items-center overflow-hidden">
    <Grip className="h-full" />
    <div className="relative ml-1 h-6 w-[98px] flex-none">
      <select aria-label="Menu set" className={clsx('size-full appearance-none pl-1 text-[11px]', field)}>
        <option>Animation</option>
      </select>
      <span className={clsx('pointer-events-none absolute top-0.5 right-0.5 flex h-5 w-4 items-center justify-center bg-[#d4d0c8]', raised)}>
        <svg viewBox="0 0 8 4" className="h-1 w-2"><path d="M0 0h8L4 4z" /></svg>
      </span>
    </div>
    <Divider />
    <div className="mr-0.5 ml-px flex">
      {['New', 'Open', 'Save'].map((n) => <ToolButton key={n} name={n} />)}
    </div>
    <Divider arrow />
    <Divider />
    <ToolButton name="Hierarchy" />
    <ToolButton name="Object" framed />
    <ToolButton name="Component" />
    <Divider />
    <ToolButton name="Mask" width="w-6 flex-none" />
    <div className="flex w-[223px] flex-none">
      {masks.map((n) => <ToolButton key={n} name={n} framed width="flex-1" />)}
    </div>
    <ToolButton name="Lock" />
    <ToolButton name="Highlight" />
    <Divider />
    {snaps.map((n) => <ToolButton key={n} name={n} />)}
    <Divider arrow />
    <Divider />
  </div>
);

const Shelf = () => (
  <div className="flex h-[69px] overflow-hidden">
    <Grip />
    <div className="flex w-8 flex-none flex-col justify-end pr-1.5 pb-1 pl-1">
      <button aria-label="Shelf tabs" className={clsx('flex h-[19px] items-center justify-center', sunken)}>
        <span className={clsx('h-2.5 w-4 rounded', raised)} />
      </button>
      <button aria-label="Shelf menu" className={clsx('flex h-[18px] items-center justify-center', raised)}>
        <svg viewBox="0 0 12 6" className="h-1.5 w-3"><path d="M0 0h12L6 6z" /></svg>
      </button>
    </div>
    <div className="min-w-0 flex-1">
      <div className="flex h-[23px] items-end">
        {tabs.map(([name, width]) => (
          <button
            key={name}
            className={clsx('flex-none rounded-t-sm border-t border-r-2 border-l border-t-white border-r-[#707070] border-l-white', width, name === 'Dynamics' ? 'h-[23px] pb-1' : 'h-5', ['Toon', 'Fluids', 'Fur', 'Hair'].includes(name) && 'pl-1 text-left')}
          >
            {name}
          </button>
        ))}
      </div>
      <div className="flex h-[45px] items-center overflow-hidden border-t-2 border-b-2 border-white border-b-[#f0eee8]">
        <div className="ml-0.5 flex border-t-2 border-l-2 border-[#808080]">
          {Object.keys(shelfIcons).map((n) => <ShelfButton key={n} name={n} />)}
        </div>
      </div>
    </div>
  </div>
);

const frames = [2, 4, 6, 8, 10, 12, 14, 16, 18, 20, 22, 24];

const TimeSlider = () => (
  <div className="flex h-[35px] overflow-hidden">
    <Grip />
    <div className={clsx('mb-px ml-1 flex min-w-0 flex-1 overflow-hidden', sunken, 'border-2')}>
      <div className="flex w-[31px] flex-none items-end justify-center bg-[#2b303b] pr-2 font-['Liberation_Mono',monospace] text-[12px] text-white">1</div>
      <div className="grid w-[742px] flex-none grid-cols-12">
        {frames.map((f) => (
          <div key={f} className="flex flex-col justify-between">
            <span className={clsx('pl-2 text-[13px] leading-[14px] font-bold', mono)}>{f}</span>
            <span className="h-4 w-[3px] bg-[#111]" />
          </div>
        ))}
      </div>
    </div>
    <input aria-label="Current time" readOnly defaultValue="1.00" className={clsx('my-1.5 ml-1 w-9 flex-none', field)} />
  </div>
);

const RangeSlider = () => (
  <div className="flex h-7 gap-1 overflow-hidden">
    <Grip className="h-full" />
    <input aria-label="Animation start" readOnly defaultValue="1.00" className={clsx('h-6 w-[71px] flex-none', field)} />
    <input aria-label="Playback start" readOnly defaultValue="1.00" className={clsx('h-6 w-[72px] flex-none', field)} />
    <div className={clsx('flex h-6 min-w-0 flex-1 bg-[#a19d95] pl-0.5', sunken, 'border-2')}>
      <div className={clsx('flex w-[293px] items-center justify-between bg-[#b8b4ac] px-1 font-[\'Liberation_Mono\',monospace] text-[13px] text-white', raised)}>
        <span className="flex items-center gap-1"><i className={clsx('h-3.5 w-3', raised)} />1</span>
        <span className="flex items-center gap-1">24<i className={clsx('h-3.5 w-3', raised)} /></span>
      </div>
    </div>
    <input aria-label="Playback end" readOnly defaultValue="24.00" className={clsx('-ml-0.5 h-6 w-[59px] flex-none', field)} />
  </div>
);

const Maya = () => (
  <section className="border-t border-l border-[#b0b0b0] bg-[#d4d0c8] pt-[3px] font-['Noto_Sans',sans-serif] text-[11px] text-black">
    <header className={clsx('ml-0.5 flex h-5 items-center gap-1 bg-linear-to-r from-[#0a246a] to-[#7ea0d2] pl-1 text-[12px] font-bold text-white', mono)}>
      <svg viewBox="0 0 34 34" className="size-4" aria-hidden="true"><MayaMark /></svg>
      <h1 className="whitespace-pre">{'Autodesk Maya 2008: .\\untitled   ---   pCube1'}</h1>
    </header>
    <nav className={clsx('flex h-[21px] items-center gap-[11px] overflow-hidden border-b border-[#a8a8a8] pl-[9px] text-[11px] whitespace-nowrap', mono)}>
      {mainMenu.map((m) => <button key={m} className="flex-none">{m}</button>)}
    </nav>
    <StatusLine />
    <Shelf />
    <div className="mt-1 flex h-[520px]">
      <ToolBox />
      <Viewport />
      <AttributeEditor />
    </div>
    <TimeSlider />
    <RangeSlider />
    <div className="flex h-[27px] items-center">
      <Grip className="h-full" />
      <label htmlFor="mel" className="w-14 flex-none pl-4 font-bold">MEL</label>
      <input id="mel" className={clsx('h-6 w-[500px] flex-none', field)} />
      <output className={clsx('ml-1.5 h-6 flex-1 bg-[#919ca8]', sunken, 'border-2')} />
    </div>
    <div className="flex h-[27px]">
      <Grip />
      <p className={clsx('ml-0.5 h-[25px] flex-1 overflow-hidden pl-3 leading-5 whitespace-pre', sunken, 'border-2')}>
        {'Move Tool: Use manipulator to move object(s). Use edit mode to change pivot (INSERT).  Ctrl+LMB to move perpendicular.'}
      </p>
    </div>
  </section>
);

/* ---------- word processor status bar ---------- */

const DrawingBar = () => (
  <div className="h-3 overflow-hidden border-t-2 border-b border-t-[#444] border-b-[#999] bg-[#e4e1da]">
    <svg viewBox="0 0 807 9" className="h-[9px] w-[807px]" aria-hidden="true">
      <path d="M12 1h26M110 1h44M243 0v3h16V0M560 1h16M582 1h14" fill="none" stroke="#222" strokeWidth="2" strokeDasharray="9 2" />
      <path d="M45 0q5 5 10 0M162 0q5 5 10 0M272 0q7 5 14 0" fill="none" stroke="#333" />
      <path d="M80 1l5 3 3-3M293 0v3h14V0M318 0v3h14V0M350 0l5 4 5-4M372 0l4 4 5-4" fill="none" stroke="#3a5ab0" strokeWidth="1.4" />
      <path d="M392 0h14v3h-14z" fill="#a02020" /><path d="M416 0h15v3h-15z" fill="#3a68b8" />
      <path d="M446 0v3h16V0" fill="none" stroke="#777" />
      <path d="M482 0h17v4h-17z" fill="#ee0808" /><path d="M518 0h17v4h-17z" fill="#fff" />
      <path d="M604 2h14M606 0l-3 2 3 3M616 0l3 2-3 3" fill="none" stroke="#111" strokeWidth="1.4" />
      <path d="M654 0h12v4h-12z" fill="#3a8a4a" />
      <path d="M675 0h12v9h-12z" fill="#777" /><path d="M678 3h6l-3 4z" fill="#000" />
      <path d="M688 0h119v9H688z" fill="#f0eeea" />
    </svg>
  </div>
);

const WordStatus = () => (
  <footer className="flex h-5 items-center gap-1 overflow-hidden bg-[#d8d4cc] font-['Liberation_Mono','Noto_Sans_CJK_SC',monospace] text-[12px] leading-4 whitespace-nowrap text-black">
    <div className="ml-1 grid h-[17px] w-[210px] flex-none grid-cols-[67px_52px_1fr] items-center border border-[#e8e5de] pl-[47px]">
      <span>3 页</span><span>1 节</span><span>3/3</span>
    </div>
    <div className="grid h-[17px] w-[238px] flex-none grid-cols-[158px_48px_1fr] items-center border border-[#e8e5de] pl-[5px]">
      <span>位置 24.5厘米</span><span>7 行</span><span>1 列</span>
    </div>
    <div className="flex flex-none gap-1 pl-1 text-[#929292]">
      {['录制', '修订', '扩展', '改写'].map((s) => (
        <button key={s} className="flex h-[17px] w-8 items-center justify-center border border-[#e8e5de] text-[13px]">{s}</button>
      ))}
    </div>
    <span className="flex h-[17px] w-[72px] flex-none items-center border border-[#e8e5de] pl-1">中文(中国)</span>
    <span className="flex h-[17px] w-11 flex-none items-center justify-center border border-[#e8e5de]">
      <svg viewBox="0 0 22 14" className="h-3.5 w-[22px]" aria-hidden="true">
        <path d="M1 2v10h6q2 0 3 1 1-1 3-1h4M3 1h5q2 0 2 2v8M10 3q0-2 2-2h4v10" fill="#fff" stroke="#222" strokeWidth="1.2" />
        <path d="M12 5l9 7M20 3l-7 10" stroke="#a01818" strokeWidth="2" />
      </svg>
    </span>
    <span className="h-[17px] w-11 flex-none border border-[#e8e5de]" />
    <span className="h-[17px] flex-1 border border-[#e8e5de]" />
  </footer>
);

/* ---------- display menu ---------- */

const Check = () => (
  <svg viewBox="0 0 9 8" className="h-2 w-[9px]" aria-hidden="true"><path d="M1 3l3 3 4-5" fill="none" stroke="currentColor" strokeWidth="2" /></svg>
);

const TearOff = () => <div className="mx-0.5 mt-0.5 mb-1 h-1 border-y border-t-[#808080] border-b-white shadow-[0_1px_0_#808080]" />;
const MenuLine = () => <div className="flex h-2.5 items-center"><div className="h-0.5 flex-1 border-t border-b border-t-[#808080] border-b-white" /></div>;

const MenuItem = ({ label, checked, arrow, active, fill }: { label: string; checked?: boolean; arrow?: boolean; active?: boolean; fill?: boolean }) => (
  <button role="menuitem" className={clsx('flex w-full items-center pr-1 text-left', fill ? 'flex-1' : 'h-[19px]', active && 'bg-[#0a246a] text-white')}>
    <span className="flex w-[17px] justify-center">{checked && <Check />}</span>
    <span className="flex-1">{label}</span>
    {arrow && <svg viewBox="0 0 4 8" className="h-2 w-1" aria-hidden="true"><path d="M0 0v8l4-4z" fill="currentColor" /></svg>}
  </button>
);

const DisplayMenu = () => (
  <div role="menu" className={clsx('absolute top-11 left-[9px] w-[198px] bg-[#d4d0c8] p-0.5 text-[11px] whitespace-nowrap', raised, mono)}>
    <TearOff />
    <div className="flex items-center pr-3">
      <MenuItem label="Grid" checked />
      <svg viewBox="0 0 10 10" className="size-2.5 flex-none" aria-hidden="true"><path d="M1 3h6v6H1zM3 1h6v6" fill="none" stroke="#000" strokeWidth="1.6" /></svg>
    </div>
    <div className="w-[153px]">
      <MenuItem label="Heads Up Display" arrow active />
      <MenuItem label="UI Elements" arrow />
      <MenuLine />
      <MenuItem label="Hide" arrow />
      <MenuItem label="Show" arrow />
      <MenuLine />
      <MenuItem label="Wireframe Color..." />
      <MenuItem label="Object Display" arrow />
      <MenuItem label="Transform Display" arrow />
      <MenuLine />
      <MenuItem label="Polygons" arrow />
      <MenuItem label="NURBS" arrow />
      <MenuItem label="Subdiv Surfaces" arrow />
      <MenuLine />
    </div>
  </div>
);

const HudMenu = () => (
  <div role="menu" className={clsx('absolute top-[73px] left-[166px] w-[154px] bg-[#d4d0c8] px-0.5 pt-px text-[11px] whitespace-nowrap', raised, mono)}>
    <TearOff />
    <div className="flex h-[192px] flex-col">
      <MenuItem label="Object Details" checked active fill />
      <MenuItem label="Poly Count" fill />
      <MenuItem label="Subdiv Details" fill />
      <MenuItem label="Animation Details" fill />
      <MenuItem label="FBIK Details" fill />
      <MenuItem label="Frame Rate" fill />
      <MenuItem label="Current Frame" fill />
      <MenuItem label="Camera Names" checked fill />
      <MenuItem label="View Axis" checked fill />
      <MenuItem label="Origin Axis" fill />
    </div>
    <MenuLine />
    <MenuItem label="Tool Message" checked />
  </div>
);

const MenuShot = () => (
  <section className="relative h-[299px] w-[427px] overflow-hidden border-t border-[#b0b0b0] bg-[#d4d0c8] pt-[3px] font-['Noto_Sans',sans-serif] text-[11px] whitespace-nowrap text-black">
    <header className={clsx('flex h-5 items-center bg-linear-to-r from-[#1f3d84] to-[#5f82bb] text-[12px] font-bold text-white', mono)}>
      <h1 className="whitespace-pre">{'.\\untitled   ---   perspShape2'}</h1>
    </header>
    <nav className={clsx('flex h-5 items-center border-b border-[#a8a8a8] text-[11px]', mono)}>
      <span className="w-[9px] overflow-hidden">:</span>
      <button className={clsx('h-5 w-[57px] flex-none', sunken)}>Display</button>
      <div className="ml-[7px] flex gap-[11px]">
        {['Window', 'Animate', 'Geometry Cache', 'Create Deformers', 'Edit'].map((m) => <button key={m}>{m}</button>)}
      </div>
    </nav>
    <div className="flex h-[33px] items-center">
      <div className="flex w-[210px] flex-none">
        <div className="flex w-2 justify-end overflow-hidden"><LineIcon name="Save" /></div>
      </div>
      <div className="flex w-[195px] flex-none">
        {masks.slice(1).map((n) => <ToolButton key={n} name={n} framed width="flex-1" />)}
      </div>
      <ToolButton name="Lock" />
    </div>
    <div className="flex h-[23px] items-end">
      <span className="w-[320px] flex-none pb-px">ac</span>
      <button className="h-[23px] w-5 flex-none border-t border-r-2 border-t-white border-r-[#707070] pb-1">cs</button>
      <button className="h-5 w-16 flex-none border-t border-r-2 border-t-white border-r-[#707070]">Rendering</button>
      <button className="h-5 w-16 flex-none border-t border-l border-white pl-1 text-left">Paint</button>
    </div>
    <div className="flex h-[46px] items-center overflow-hidden border-t-2 border-b border-t-white border-b-[#808080]">
      <div className="flex w-[309px] flex-none">
        <div className="flex w-2.5 justify-end overflow-hidden"><ShelfButton name="Air" /></div>
      </div>
      {['Volume Curve', 'Use Selected', 'Active Body', 'Passive Body'].map((n) => <ShelfButton key={n} name={n} />)}
    </div>
    <div className={clsx('flex h-6 items-center border-b-2 border-[#606060] pt-1 text-[11px]', mono)}>.i</div>
    <div className={clsx('h-36 bg-[#a0a0a0] pl-[319px] text-[12px] leading-[21px] font-bold text-white', mono)}>
      <dl className="-mt-1 grid h-32 auto-rows-fr grid-cols-[40px_1fr]">
        <dt /><dd>N/A</dd>
        <dt /><dd>N/A</dd>
        <dt /><dd>N/A</dd>
        <dt /><dd>default</dd>
        <dt className="text-[#0a4a28]">Camera:</dt><dd>0.057</dd>
        <dt className="text-[#0a4a28]">ts:</dt><dd>1</dd>
      </dl>
    </div>
    <DisplayMenu />
    <HudMenu />
  </section>
);

const App: React.FC = () => (
  <main className="overflow-hidden bg-white pt-[125px] pb-[26px] pl-[143px]">
    <IconDefs />
    <MenuShot />
    <p className="mt-[43px] mb-[9px] pl-0.5 font-['Noto_Sans_CJK_SC',sans-serif] text-[19px] leading-[25px] font-light text-black">
      点选所要显示信息的物体，即获得其相关信息
    </p>
    <Maya />
    <DrawingBar />
    <WordStatus />
  </main>
);

export default App;
